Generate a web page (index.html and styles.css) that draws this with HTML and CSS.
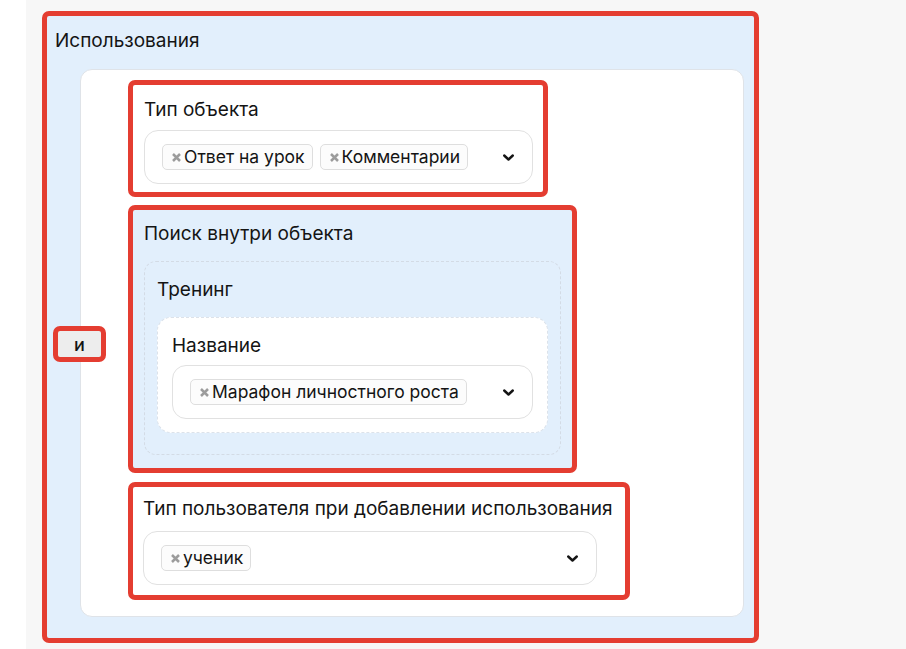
FILE: index.html
```html
<!DOCTYPE html>
<html lang="ru">
<head>
    <meta charset="UTF-8">
    <meta name="viewport" content="width=device-width, initial-scale=1.0">
    <title>Условия использования</title>
    <link rel="stylesheet" href="styles.css">
</head>
<body>
    <div class="layout">
        <aside class="side"></aside>

        <main class="main">
            <section class="group">
                <div class="group-title">Использования</div>

                <div class="group-body">
                    <span class="joiner">и</span>

                    <div class="field field-type">
                        <div class="label">Тип объекта</div>
                        <div class="select">
                            <div class="tags">
                                <span class="tag">
                                    <svg class="tag-x" width="9" height="9" viewBox="0 0 9 9"><path d="M1 1L8 8M8 1L1 8"/></svg>
                                    Ответ на урок
                                </span>
                                <span class="tag">
                                    <svg class="tag-x" width="9" height="9" viewBox="0 0 9 9"><path d="M1 1L8 8M8 1L1 8"/></svg>
                                    Комментарии
                                </span>
                            </div>
                            <svg class="chevron" width="11" height="7" viewBox="0 0 11 7"><path d="M1.2 1.5L5.5 5.5L9.8 1.5"/></svg>
                        </div>
                    </div>

                    <div class="field field-search">
                        <div class="label">Поиск внутри объекта</div>
                        <div class="subgroup">
                            <div class="label">Тренинг</div>
                            <div class="subcard">
                                <div class="label">Название</div>
                                <div class="select">
                                    <div class="tags">
                                        <span class="tag">
                                            <svg class="tag-x" width="9" height="9" viewBox="0 0 9 9"><path d="M1 1L8 8M8 1L1 8"/></svg>
                                            Марафон личностного роста
                                        </span>
                                    </div>
                                    <svg class="chevron" width="11" height="7" viewBox="0 0 11 7"><path d="M1.2 1.5L5.5 5.5L9.8 1.5"/></svg>
                                </div>
                            </div>
                        </div>
                    </div>

                    <div class="field field-user">
                        <div class="label">Тип пользователя при добавлении использования</div>
                        <div class="select">
                            <div class="tags">
                                <span class="tag">
                                    <svg class="tag-x" width="9" height="9" viewBox="0 0 9 9"><path d="M1 1L8 8M8 1L1 8"/></svg>
                                    ученик
                                </span>
                            </div>
                            <svg class="chevron" width="11" height="7" viewBox="0 0 11 7"><path d="M1.2 1.5L5.5 5.5L9.8 1.5"/></svg>
                        </div>
                    </div>
                </div>
            </section>
        </main>
    </div>
</body>
</html>
```

FILE: styles.css
```css
* {
    box-sizing: border-box;
}

body {
    font-family: "Inter", "Noto Sans", sans-serif;
    margin: 0;
    padding: 0;
    background-color: #f7f7f7;
    color: #141414;
}

.layout {
    display: flex;
    min-height: 649px;
}

.side {
    width: 26px;
    flex-shrink: 0;
    background-color: #fff;
}

.main {
    flex: 1;
    padding: 11px 0 0 16px;
}

/* outer condition group */
.group {
    width: 717px;
    height: 632px;
    padding: 13px 0 0 8px;
    background-color: #e2effc;
    border: 5px solid #e43d31;
    border-radius: 7px;
}

.group-title {
    font-size: 19px;
    line-height: 24px;
}

.group-body {
    position: relative;
    margin: 16px 10px 0 25px;
    height: 548px;
    padding: 10px 0 0 47px;
    background-color: #fff;
    border: 1px solid #dfe3e8;
    border-radius: 12px;
}

.joiner {
    position: absolute;
    left: -28px;
    top: 256px;
    width: 53px;
    height: 36px;
    display: flex;
    align-items: center;
    justify-content: center;
    font-size: 18px;
    font-weight: 500;
    background-color: #ededed;
    border: 5px solid #e43d31;
    border-radius: 7px;
}

.label {
    font-size: 19px;
    line-height: 24px;
    white-space: nowrap;
}

.field {
    border: 5px solid #e43d31;
    border-radius: 7px;
    padding: 13px 10px 8px 11px;
}

.field-type {
    width: 420px;
}

.field-search {
    width: 449px;
    margin-top: 8px;
    padding: 12px 11px 13px 11px;
    background-color: #e2effc;
}

.field-user {
    width: 502px;
    margin-top: 9px;
    padding: 10px 28px 10px 10px;
}

.field .label + .select {
    margin-top: 8px;
}

.field-user .label + .select {
    margin-top: 10px;
}

.subgroup {
    margin-top: 15px;
    padding: 16px 12px 21px 12px;
    border: 1px dashed #d3dbe5;
    border-radius: 12px;
}

.subcard {
    margin-top: 15px;
    padding: 16px 14px 13px 14px;
    background-color: #fff;
    border: 1px dashed #dce2ea;
    border-radius: 14px;
}

.subcard .label + .select {
    margin-top: 7px;
}

/* multi select */
.select {
    display: flex;
    align-items: center;
    justify-content: space-between;
    height: 54px;
    padding: 0 18px 0 17px;
    background-color: #fff;
    border: 1px solid #e1e1e1;
    border-radius: 14px;
}

.tags {
    display: flex;
    gap: 7px;
}

.tag {
    display: inline-flex;
    align-items: center;
    gap: 3px;
    height: 26px;
    padding: 0 7px 0 9px;
    font-size: 17.5px;
    line-height: 24px;
    white-space: nowrap;
    background-color: #fcfcfc;
    border: 1px solid #dedede;
    border-radius: 5px;
}

.tag-x path {
    stroke: #9c9c9c;
    stroke-width: 2.5;
    fill: none;
}

.chevron path {
    stroke: #141414;
    stroke-width: 2.4;
    fill: none;
    stroke-linecap: round;
    stroke-linejoin: round;
}
```
